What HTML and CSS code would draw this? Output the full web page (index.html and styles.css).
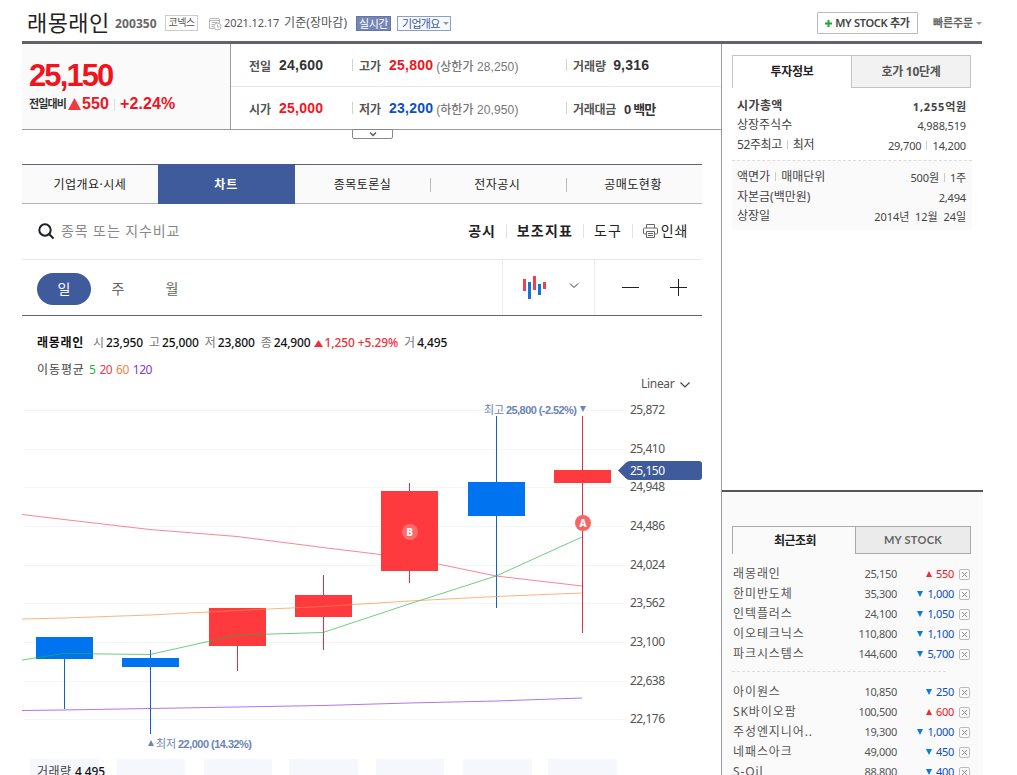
FILE: index.html
```html
<!DOCTYPE html>
<html lang="ko">
<head>
  <meta charset="UTF-8" />
  <title>래몽래인 - 차트</title>
  <link rel="stylesheet" href="styles.css">
</head>
<body>
  <div class="wrap">
    <header class="head">
      <h1>래몽래인</h1>
      <b class="code">200350</b>
      <span class="market">코넥스</span>
      <svg class="cal" width="13" height="13" viewBox="0 0 13 13" fill="none" stroke="#b5b5b5">
        <path d="M.5 2.5h10M.5 1v9.5H5M10.500 1v4M2.500 4.500h6M2.500 6.500h3M2.500 8.500h2M1 .5h9"/>
        <circle cx="8.500" cy="8.500" r="3.500" fill="#fff"/><path d="M8.500 6.500v2.500h2"/>
      </svg>
      <span class="date">2021.12.17</span>
      <span class="base">기준(장마감)</span>
      <span class="live">실시간</span>
      <span class="summary">기업개요<i></i></span>
      <button class="mystock"><svg width="7" height="7"><path d="M3.500 0v7M0 3.500h7" stroke="#1eaa32" stroke-width="2"/></svg><span>MY STOCK 추가</span></button>
      <span class="order">빠른주문</span><i class="caret"></i>
    </header>

    <div class="cols">
      <main class="main">
        <section class="rate">
          <div class="today">
            <strong>25,150</strong>
            <p><span class="lbl">전일대비</span><svg width="13" height="12"><path d="M6.500 0L13 12H0z" fill="#ee3a43"/></svg><b class="diff">550</b><i></i><b class="pct">+2.24%</b></p>
          </div>
          <div class="figures">
            <div class="cell first"><span>전일</span><b>24,600</b></div>
            <div class="cell"><span>고가</span><b class="up">25,800</b><em>(상한가 28,250)</em></div>
            <div class="cell vol"><span>거래량</span><b>9,316</b></div>
            <div class="cell first"><span>시가</span><b class="up">25,000</b></div>
            <div class="cell"><span>저가</span><b class="down">23,200</b><em>(하한가 20,950)</em></div>
            <div class="cell amount"><span>거래대금</span><b>0 백만</b></div>
          </div>
          <button class="more"><svg width="8" height="5" fill="none" stroke="#555" stroke-width="1.300"><path d="M1 .5l3 3 3-3"/></svg></button>
        </section>

        <nav class="tabs">
          <a>기업개요·시세</a><a class="on">차트</a><a>종목토론실</a><a>전자공시</a><a>공매도현황</a>
        </nav>

        <div class="tools">
          <svg class="search" width="17" height="17" fill="none" stroke="#1e1e23" stroke-width="2"><circle cx="7" cy="7" r="5.700"/><path d="M11 11l4.500 4.500"/></svg>
          <span class="ph">종목 또는 지수비교</span>
          <b class="t1">공시</b><b class="t2">보조지표</b><span class="t3">도구</span>
          <span class="t4"><svg width="15" height="14" viewBox="0 0 15 14" fill="none" stroke="#666"><path d="M3.500 4V.5h8V4M3.500 10h-2q-1 0-1-1V5q0-1 1-1h12q1 0 1 1v4q0 1-1 1h-2M3.500 7.500h8v6h-8zM5 9.500h5M5 11.500h5"/></svg>인쇄</span>
        </div>

        <div class="period">
          <a class="on">일</a><a>주</a><a>월</a>
          <div class="type">
            <svg width="24" height="24"><path d="M0 4h3v12H0zM10 1h3v14h-3zM20 7h3v7h-3z" fill="#f1404b"/><path d="M5 7h3v17H5zM15 9h3v11h-3z" fill="#1471d8"/></svg>
            <svg width="10" height="6" fill="none" stroke="#333"><path d="M1 .5l4 4 4-4"/></svg>
          </div>
          <div class="scale">
            <svg width="17" height="17"><path d="M0 8.500h17" stroke="#222"/></svg>
            <svg width="17" height="17"><path d="M0 8.500h17M8.500 0v17" stroke="#222"/></svg>
          </div>
        </div>

        <div class="info">
          <b class="nm">래몽래인</b>
          <span>시</span><b>23,950</b><span>고</span><b>25,000</b><span>저</span><b>23,800</b><span>종</span><b>24,900</b>
          <svg width="9" height="7"><path d="M4.500 0L9 7H0z" fill="#f1303c"/></svg><b class="chg">1,250 +5.29%</b><span>거</span><b>4,495</b>
        </div>
        <div class="ma"><span>이동평균</span><i class="m5">5</i><i class="m20">20</i><i class="m60">60</i><i class="m120">120</i></div>
        <div class="linear">Linear<svg width="10" height="6" fill="none" stroke="#444" stroke-width="1.200"><path d="M.5 .5l4.500 4.500L9.500 .5"/></svg></div>

        <svg class="chart" width="680" height="383" viewBox="22 392 680 383">
          <g fill="#f6f7fc">
            <rect x="30" y="759" width="69" height="20"/><rect x="117" y="759" width="68" height="20"/><rect x="204" y="759" width="68" height="20"/><rect x="289" y="759" width="69" height="20"/><rect x="376" y="759" width="68" height="20"/><rect x="463" y="759" width="69" height="20"/><rect x="548" y="759" width="69" height="20"/>
          </g>
          <path class="grid" d="M24 410.500H625M24 449.500H625M24 487.500H625M24 526.500H625M24 565.500H625M24 603.500H625M24 642.500H625M24 681.500H625M24 719.500H625"/>
          <!-- falling candles -->
          <g class="fall">
            <path d="M64.500 637V709M150.500 650V734M496.500 416V608"/>
            <rect x="36" y="637" width="57" height="22"/><rect x="122" y="658" width="57" height="9"/><rect x="468" y="482" width="57" height="34"/>
          </g>
          <polyline class="ma20" points="22,514.500 64,519.500 150,529.500 237,536.500 323,547.500 409,558 438,564 496,576 582,586"/>
          <!-- rising candles -->
          <g class="rise">
            <path d="M237.500 608V671M323.500 575V650M409.500 483V583M582.500 416V633"/>
            <rect x="209" y="608" width="57" height="38"/><rect x="295" y="595" width="57" height="22"/><rect x="381" y="491" width="57" height="80"/><rect x="554" y="470" width="57" height="13"/>
          </g>
          <g class="lines">
            <polyline stroke="#f78f3c" points="22,619 64,618 150,615 237,610.500 323,606.500 409,601 496,596.500 582,593"/>
            <polyline stroke="#22b53a" points="22,660 64,653.500 150,654.500 237,635 323,632.500 409,604 496,576 582,537"/>
            <polyline stroke="#8c2be2" points="22,710.500 64,710 150,708.500 237,707 323,705.500 409,703 496,701 582,698"/>
          </g>
          <circle cx="410" cy="532" r="8" fill="#ff6b6b"/><text class="mk" x="409.500" y="535.500">B</text>
          <circle cx="583" cy="523" r="8" fill="#f96464"/><text class="mk" x="583" y="526.500">A</text>
          <g class="peak">
            <text x="484" y="414" textLength="20">최고</text><text class="n" x="506" y="414" textLength="71">25,800 (-2.52%)</text><path d="M580 406h6l-3 6z"/>
            <text x="156" y="748" textLength="20">최저</text><text class="n" x="178" y="748" textLength="74">22,000 (14.32%)</text><path d="M148 746h6l-3-6z"/>
          </g>
          <path d="M618 470.500l8-8q2-1.500 4-1.500h69q3 0 3 3v13q0 3-3 3h-69q-2 0-4-1.500z" fill="#3f5b9b"/>
          <g class="axis">
            <text x="630" y="414" textLength="35">25,872</text>
            <text x="630" y="453" textLength="35">25,410</text>
            <text x="630" y="491" textLength="35">24,948</text>
            <text x="630" y="530" textLength="35">24,486</text>
            <text x="630" y="569" textLength="35">24,024</text>
            <text x="630" y="607" textLength="35">23,562</text>
            <text x="630" y="646" textLength="35">23,100</text>
            <text x="630" y="685" textLength="35">22,638</text>
            <text x="630" y="723" textLength="35">22,176</text>
            <text class="now" x="630" y="475" textLength="35">25,150</text>
          </g>
          <text class="volume" x="37" y="776" textLength="34">거래량</text><text class="volume v" x="75" y="776" textLength="30">4,495</text>
        </svg>
      </main>

      <aside class="side">
        <section class="invest">
          <div class="stabs"><b class="on">투자정보</b><b>호가 10단계</b></div>
          <div class="rows">
            <div class="cap"><b>시가총액</b><b>1,255억원</b></div>
            <div><span>상장주식수</span><em>4,988,519</em></div>
            <div><span class="w52">52주최고<i></i>최저</span><em>29,700<i></i>14,200</em></div>
          </div>
          <div class="rows gray">
            <div><span>액면가<i></i>매매단위</span><em>500원<i></i>1주</em></div>
            <div><span>자본금(백만원)</span><em>2,494</em></div>
            <div><span>상장일</span><em class="ymd">2014년 12월 24일</em></div>
          </div>
        </section>
        <section class="recent">
          <div class="stabs"><b class="on">최근조회</b><b class="en">MY STOCK</b></div>
          <ul>
            <li><span>래몽래인</span><em>25,150</em><b class="up">550</b><i></i></li>
            <li><span>한미반도체</span><em>35,300</em><b>1,000</b><i></i></li>
            <li><span>인텍플러스</span><em>24,100</em><b>1,050</b><i></i></li>
            <li><span>이오테크닉스</span><em>110,800</em><b>1,100</b><i></i></li>
            <li><span>파크시스템스</span><em>144,600</em><b>5,700</b><i></i></li>
          </ul>
          <ul class="second">
            <li><span>아이원스</span><em>10,850</em><b>250</b><i></i></li>
            <li><span>SK바이오팜</span><em>100,500</em><b class="up">600</b><i></i></li>
            <li><span>주성엔지니어..</span><em>19,300</em><b>1,000</b><i></i></li>
            <li><span>네패스아크</span><em>49,000</em><b>450</b><i></i></li>
            <li><span>S-Oil</span><em>88,800</em><b>400</b><i></i></li>
          </ul>
        </section>
      </aside>
    </div>
  </div>
</body>
</html>
```
FILE: styles.css
```css
* { box-sizing: border-box; margin: 0; padding: 0; }
body {
  height: 775px;
  overflow: hidden;
  background: #fff;
  color: #333;
  font: 12px/20px 'Noto Sans', 'Noto Sans CJK KR', sans-serif;
  white-space: nowrap;
}
i, em { font-style: normal; }
ul { list-style: none; }
svg { display: block; flex: none; }
button { font: inherit; }
.wrap { width: 961px; margin-left: 22px; }

/* header */
.head {
  display: flex;
  align-items: center;
  width: 960px;
  height: 44px;
  padding: 5px 0 0 5px;
  border-bottom: 3px solid #62626d;
}
.head > * { flex: none; }
.head h1 { width: 88px; margin-top: -5px; font: 400 22px/30px 'Noto Sans CJK KR', sans-serif; letter-spacing: .4px; color: #222; }
.code { width: 50px; margin-top: 2px; font-size: 12px; letter-spacing: .1px; color: #666; }
.market { width: 33px; height: 16px; border: 1px solid #ccc; font-size: 10px; line-height: 13px; letter-spacing: -.6px; text-align: center; color: #555; }
.cal { margin: 3px 2px 0 11px; }
.date { width: 60px; font-size: 11px; letter-spacing: -.1px; color: #555; }
.base { width: 72px; color: #555; letter-spacing: .1px; }
.live, .summary { height: 15px; font-size: 11px; line-height: 13px; letter-spacing: -.5px; }
.live { width: 35px; background: #7386b6; border: 1px solid #6377aa; color: #fff; text-align: center; }
.summary { display: flex; align-items: center; gap: 3px; width: 54px; margin-left: 6px; padding-left: 4px; border: 1px solid #8b9fcc; background: #f6f9ff; color: #40599b; letter-spacing: -.7px; }
.summary i, .caret { border: 3px solid transparent; border-top-color: #999; border-bottom: 0; }
.mystock { display: flex; align-items: center; justify-content: center; gap: 3px; width: 101px; height: 22px; margin: 0 15px 0 auto; background: #fff; border: 1px solid #bbb; border-radius: 1px; font-size: 11px; font-weight: 600; letter-spacing: -.3px; color: #444; }
.order { font-size: 11px; font-weight: 600; letter-spacing: -.1px; color: #666; }
.caret { margin-left: 3px; }

.cols { display: flex; height: 731px; }
.main { width: 699px; }

/* price summary */
.rate { position: relative; display: flex; height: 86px; border-bottom: 1px solid #9b9ba0; }
.today { width: 209px; padding: 15px 0 0 7px; background: #fafafa; border-right: 1px solid #9b9ba0; color: #f0141e; font-family: 'Liberation Sans', 'Noto Sans CJK KR', sans-serif; }
.today strong { display: block; height: 34px; font-size: 31px; line-height: 34px; letter-spacing: -1.9px; }
.today p { display: flex; align-items: center; height: 22px; }
.lbl { width: 39px; font-size: 11px; font-weight: 700; letter-spacing: -.9px; color: #333; }
.diff, .pct { font-size: 16px; letter-spacing: .1px; }
.diff { width: 33px; padding-left: 1px; }
.today i { width: 1px; height: 12px; margin: 2px 5px 0 0; background: #ddd; }
.figures { display: grid; grid-template: 43px 42px / 121px 214px 155px; }
.cell { display: flex; align-items: center; font: 12px 'Liberation Sans', 'Noto Sans CJK KR', sans-serif; border-bottom: 1px solid #e8e8e8; }
.cell:nth-child(n+4) { border-bottom: 0; }
.cell:before { content: ''; width: 1px; height: 12px; margin-right: 6px; background: #d2d2d2; }
.cell.first:before { width: 0; margin-right: 18px; }
.cell span { margin-right: 8px; font-weight: 700; color: #555; }
.cell b { font-size: 14px; letter-spacing: .2px; }
.cell em { margin-left: 3px; font-weight: 500; letter-spacing: .1px; color: #777; }
.cell .up, .recent .up { color: #f0141e; }
.cell .down { color: #0b4fc4; }
.cell.vol span { margin-right: 7px; }
.amount span { letter-spacing: -.3px; }
.amount b { font-size: 13px; letter-spacing: -.8px; }
.more { position: absolute; left: 330px; top: 85px; display: flex; align-items: center; justify-content: center; width: 41px; height: 10px; background: #fff; border: 1px solid #888; border-radius: 0 0 2px 2px; }

/* tabs */
.tabs { display: flex; width: 680px; height: 40px; margin-top: 34px; background: #fafafa; border-top: 1px solid #62626d; border-bottom: 1px solid #b5b5b5; }
.tabs a { display: flex; align-items: center; justify-content: center; width: 136px; padding-top: 1px; font-size: 12px; letter-spacing: .5px; color: #222; }
.tabs a:nth-child(n+4):before { content: ''; width: 1px; height: 14px; margin-right: auto; background: #bbb; }
.tabs a:nth-child(n+4):after { content: ''; width: 3px; margin-left: auto; }
.tabs .on { width: 137px; height: 40px; margin-top: -1px; padding-top: 2px; background: #3f5b9b; color: #fff; font-weight: 700; letter-spacing: 1px; }

/* chart toolbar */
.tools { display: flex; align-items: center; width: 680px; height: 56px; padding: 0 14px 0 16px; border-bottom: 1px solid #e8e9ec; font-size: 14px; color: #222; }
.ph { margin: -2px auto 0 6px; color: #888; letter-spacing: .9px; }
.tools b { font-weight: 500; margin-top: -1px; }
.tools .t1, .tools .t2 { font-weight: 600; }
.t2, .t3, .t4 { position: relative; padding-left: 21px; }
.t2:before, .t3:before, .t4:before { content: ''; position: absolute; left: 10px; top: 3px; width: 1px; height: 14px; background: #e3e3e3; }
.t2 { letter-spacing: 1.200px; }
.t1 { letter-spacing: .8px; }
.t3 { margin-top: -1px; letter-spacing: 1px; }
.t4 { display: flex; align-items: center; gap: 3px; margin-top: -1px; letter-spacing: .7px; }
.period { display: flex; align-items: center; width: 680px; height: 56px; padding-left: 15px; border-bottom: 1px solid #62626d; font-size: 14px; color: #666; }
.period a { width: 54px; height: 32px; margin-top: 2px; line-height: 32px; text-align: center; }
.period .on { border-radius: 16px; background: #3f5b9b; color: #fff; }
.type { display: flex; gap: 22px; width: 93px; height: 55px; margin-left: auto; padding: 15px 0 0 20px; border: 1px solid #eceef2; border-width: 0 1px; }
.type svg + svg { margin-top: 8px; }
.scale { display: flex; gap: 31px; width: 107px; padding-left: 27px; }

/* quote line above the chart */
.info { display: flex; align-items: center; height: 20px; margin-top: 17px; padding-left: 15px; }
.info b { font-weight: 500; letter-spacing: -.13px; color: #111; }
.info .nm { width: 53px; font-weight: 700; letter-spacing: .7px; }
.info span { margin: 0 2px 0 6px; color: #777; }
.info .nm + span { margin-left: 3px; }
.info svg { margin: 0 2px 0 3px; }
.info .chg { color: #f1303c; letter-spacing: -.1px; }
.ma { display: flex; height: 20px; margin-top: 7px; padding-left: 15px; gap: 4px; color: #444; letter-spacing: -.5px; }
.ma span { width: 48px; letter-spacing: .9px; }
.m5 { color: #1eb13c; }
.m20 { color: #e63a50; }
.m60 { color: #f0844b; }
.m120 { color: #8238d8; }
.linear { display: flex; align-items: center; gap: 6px; height: 20px; margin: -6px 0 -2px 619px; color: #555; letter-spacing: -.3px; }
.linear svg { margin-top: 2px; }

.chart { font-family: 'Noto Sans', 'Noto Sans CJK KR', sans-serif; font-size: 12px; }
.grid { stroke: #f3f5f7; }
.fall { fill: #0073f0; stroke: none; }
.fall path { stroke: #0b63c9; }
.rise { fill: #ff3a3f; }
.rise path { stroke: #dd3148; }
.ma20 { fill: none; stroke: #f5475b; opacity: .65; }
.lines { fill: none; opacity: .65; }
.mk { font-size: 10px; font-weight: 800; fill: #fff; text-anchor: middle; }
.peak { fill: #6c84b8; font-size: 11px; }
.peak .n { font: bold 11px 'Liberation Sans', sans-serif; }
.axis { fill: #555; }
.axis .now { fill: #fff; }
.volume { fill: #444; }
.v { fill: #111; font-weight: 500; }

/* sidebar */
.side { width: 262px; border-left: 1px solid #9b9ba0; }
.invest { height: 446px; padding: 11px 11px 0 10px; }
.stabs { display: flex; }
.stabs b { width: 120px; height: 33px; border: 1px solid #c4c4c4; background: #f2f2f2; line-height: 32px; text-align: center; letter-spacing: -.3px; color: #555; }
.stabs .on { width: 119px; background: none; border-width: 1px 0 0 1px; color: #222; }
.invest .stabs { width: 239px; }
.rows { width: 240px; padding: 8px 6px 5px 5px; }
.rows div { display: flex; justify-content: space-between; align-items: center; height: 19.500px; color: #444; }
.rows em { margin-top: 2px; font-size: 11px; letter-spacing: -.15px; }
.rows .ymd { letter-spacing: -.05px; word-spacing: 3px; }
.rows i { display: inline-block; width: 1px; height: 9px; margin: 0 5px; background: #ccc; }
.w52 { letter-spacing: -.4px; }
.rows .cap b { letter-spacing: .4px; }
.rows .cap b:last-child { margin-top: 2px; font-size: 11px; letter-spacing: .8px; margin-right: -1px; }
.gray { height: 70px; padding-top: 7px; border-top: 1px dashed #ddd; background: #fafafa; }
.recent { height: 285px; padding: 34px 11px 0 10px; overflow: hidden; background: #fafafa; border-top: 2px solid #55555a; }
.recent .stabs b { height: 28px; width: 116px; background: #ebebeb; border-color: #aaa; line-height: 26px; }
.recent .stabs .on { width: 123px; background: none; line-height: 28px; letter-spacing: -.6px; padding-left: 2px; }
.recent .stabs .en { font-family: Lato, 'Noto Sans', sans-serif; font-size: 11px; letter-spacing: .3px; color: #666; }
.recent ul { padding-top: 9px; }
.recent .second { padding-top: 8px; }
.recent .second:before { content: ''; display: block; width: 214px; border-top: 1px dashed #ddd; margin-bottom: 9px; }
.recent li { display: grid; grid-template-columns: 80px 84px 57px 13px; height: 20px; align-items: center; padding-left: 1px; font-size: 11px; }
.recent li span { margin-top: 1px; font-size: 12px; letter-spacing: .9px; color: #555; }
.recent em { color: #555; text-align: right; letter-spacing: -.3px; }
.recent li b { display: flex; align-items: center; justify-content: flex-end; gap: 4px; font-weight: 400; letter-spacing: -.3px; color: #0b4fc4; }
.recent li b:before { content: ''; border: 3.500px solid transparent; border-top: 6px solid #0a7be0; border-bottom: 0; }
.recent li b.up:before { border-top: 0; border-bottom: 6px solid #ee2b34; }
.recent li i { width: 11px; height: 11px; margin: 2px 0 0 5px; border: 1px solid #bbb; border-radius: 2px; background: linear-gradient(45deg, transparent 44%, #888 44%, #888 56%, transparent 56%) center/5px 5px no-repeat, linear-gradient(-45deg, transparent 44%, #888 44%, #888 56%, transparent 56%) center/5px 5px no-repeat; }
```
